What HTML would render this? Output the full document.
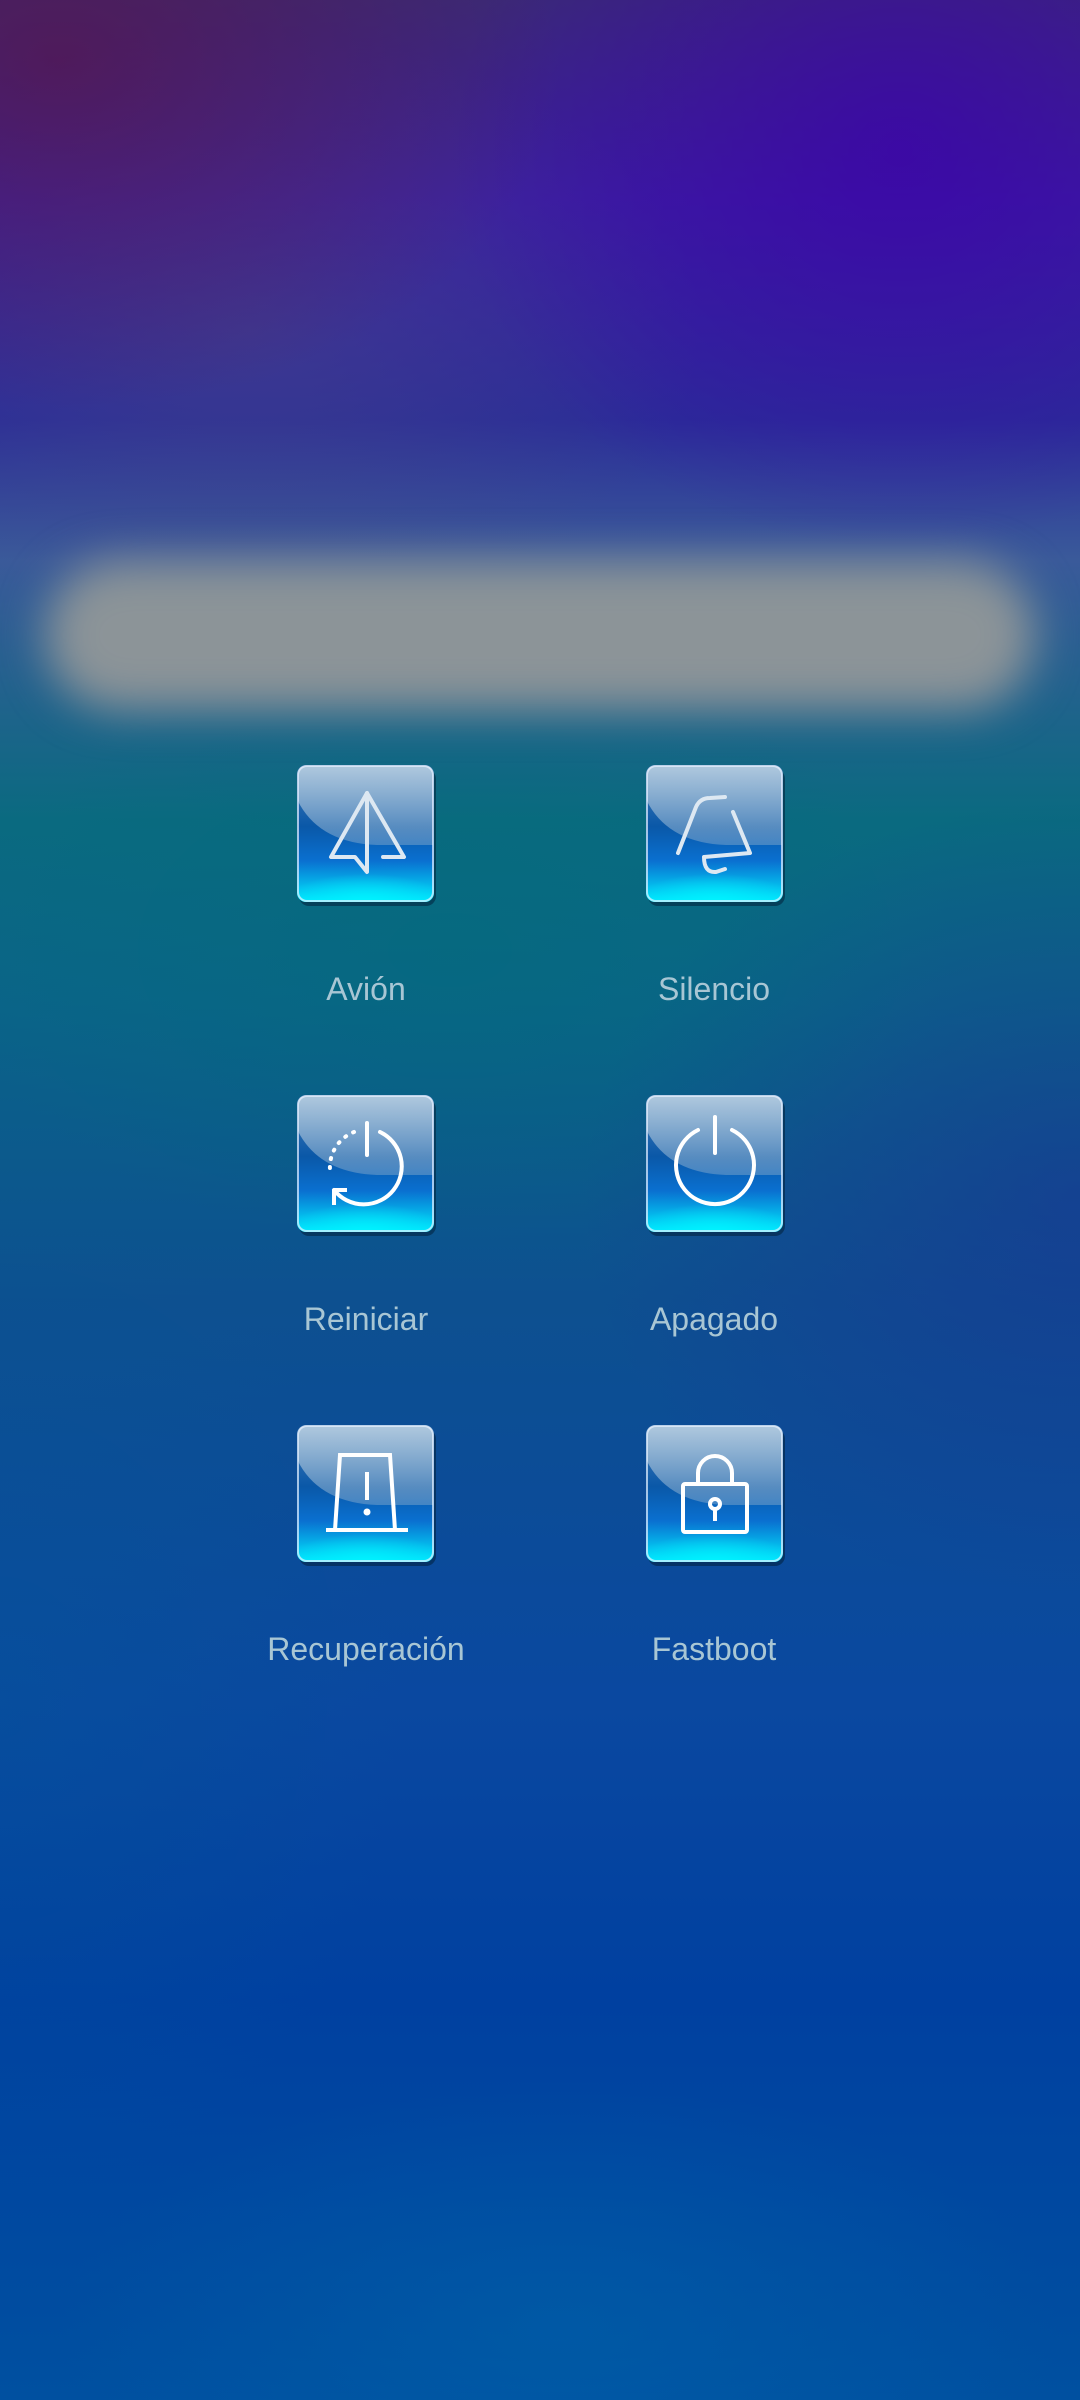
<!DOCTYPE html>
<html><head><meta charset="utf-8"><style>
html,body{margin:0;padding:0}
body{width:1080px;height:2400px;position:relative;overflow:hidden;
background:linear-gradient(180deg,#3a2a78 0px,#3a1ea0 200px,#2a2c98 420px,#3a5a9a 560px,#0a6a80 820px,#0a6488 1000px,#0d5090 1300px,#0a48a0 1700px,#0040a0 2000px,#0050a0 2400px);}
.l{position:absolute;left:0;top:0;width:1080px;height:2400px}
.band{position:absolute;left:45px;top:560px;width:990px;height:150px;border-radius:75px;background:#8c9498;filter:blur(22px)}
.lab{position:absolute;width:400px;text-align:center;font-family:"Liberation Sans",sans-serif;font-size:32px;color:#a8c6d4}
svg.ic{position:absolute;width:137px;height:137px;overflow:visible}
</style></head><body>
<div class="l" style="background:radial-gradient(ellipse 500px 350px at 60px 60px,rgba(90,20,70,.65),transparent),radial-gradient(ellipse 450px 400px at 900px 150px,rgba(60,0,170,.7),transparent),radial-gradient(ellipse 450px 300px at 250px 330px,rgba(80,80,130,.4),transparent)"></div>
<div class="l" style="background:radial-gradient(ellipse 500px 300px at 450px 950px,rgba(0,110,120,.4),transparent),radial-gradient(ellipse 500px 400px at 1080px 1200px,rgba(30,40,150,.45),transparent),radial-gradient(ellipse 500px 250px at 560px 2330px,rgba(0,100,170,.5),transparent),radial-gradient(ellipse 400px 500px at 0px 1700px,rgba(0,90,150,.3),transparent)"></div>
<div class="band"></div>

<svg width="0" height="0" style="position:absolute">
<defs>
<linearGradient id="g" x1="0" y1="0" x2="0" y2="1">
<stop offset="0" stop-color="#4b80b8"/><stop offset=".45" stop-color="#0a58a8"/><stop offset=".7" stop-color="#0a70d0"/><stop offset="1" stop-color="#00eaff"/></linearGradient>
<linearGradient id="h" x1="0" y1="0" x2="0" y2="1">
<stop offset="0" stop-color="#b4cce0" stop-opacity=".95"/><stop offset="1" stop-color="#7ea6cc" stop-opacity=".5"/></linearGradient>
<radialGradient id="c" cx=".5" cy="1" r=".6"><stop offset="0" stop-color="#00f4ff" stop-opacity=".9"/><stop offset="1" stop-color="#00f4ff" stop-opacity="0"/></radialGradient>
<g id="box">
<rect x="2" y="4" width="137" height="137" rx="10" fill="#02203a" opacity=".55"/>
<rect x="0" y="0" width="137" height="137" rx="9" fill="url(#g)"/>
<rect x="0" y="90" width="137" height="47" rx="9" fill="url(#c)"/>
<path d="M9 1 H128 Q136 1 136 9 V80 H80 Q25 78 3 40 L1 36 V9 Q1 1 9 1Z" fill="url(#h)"/>
<rect x="1" y="1" width="135" height="135" rx="9" fill="none" stroke="#e8f2ff" stroke-opacity=".7" stroke-width="2"/>
</g>
</defs></svg>

<svg class="ic" style="left:297px;top:765px" viewBox="0 0 137 137"><use href="#box"/>
<g fill="none" stroke="#dde8f2" stroke-width="4" stroke-linejoin="round" stroke-linecap="round"><path d="M70 28 L34 92 L58 92 L70 107 Z"/><path d="M70 28 L107 92 L86 92"/></g></svg>

<svg class="ic" style="left:646px;top:765px" viewBox="0 0 137 137"><use href="#box"/>
<g fill="none" stroke="#dde8f2" stroke-width="4" stroke-linecap="round" stroke-linejoin="round"><path d="M32 88 L50 42 Q54 33 64 33 L79 32"/><path d="M87 47 L104 88 L58 92 Q58 108 70 107 L79 104"/></g></svg>

<svg class="ic" style="left:297px;top:1095px" viewBox="0 0 137 137"><use href="#box"/>
<g fill="none" stroke="#fff" stroke-width="4" stroke-linecap="round"><path d="M70 28 V60"/><path d="M83 37 A38 38 0 1 1 37 95"/><path d="M57 37 A38 38 0 0 0 33 75" stroke-dasharray="1 8"/><path d="M37 95 L37 110 M37 95 L50 95" stroke-linecap="butt"/></g></svg>

<svg class="ic" style="left:646px;top:1095px" viewBox="0 0 137 137"><use href="#box"/>
<g fill="none" stroke="#fff" stroke-width="4" stroke-linecap="round"><path d="M69 22 V58"/><path d="M86 35 A39 39 0 1 1 52 35"/></g></svg>

<svg class="ic" style="left:297px;top:1425px" viewBox="0 0 137 137"><use href="#box"/>
<g fill="none" stroke="#fff" stroke-width="4"><path d="M38 105 L43 30 H93 L98 105"/><path d="M29 105 H111"/><path d="M70 47 V75"/></g><circle cx="70" cy="87" r="3.5" fill="#fff"/></svg>

<svg class="ic" style="left:646px;top:1425px" viewBox="0 0 137 137"><use href="#box"/>
<g fill="none" stroke="#fff" stroke-width="4" stroke-linejoin="round"><rect x="37" y="59" width="64" height="48" rx="2"/><path d="M52 59 V48 A17 17 0 0 1 86 48 V59"/><circle cx="69" cy="79" r="5"/><path d="M69 84 V96"/></g></svg>

<div class="lab" style="left:166px;top:971px">Avión</div>
<div class="lab" style="left:514px;top:971px">Silencio</div>
<div class="lab" style="left:166px;top:1301px">Reiniciar</div>
<div class="lab" style="left:514px;top:1301px">Apagado</div>
<div class="lab" style="left:166px;top:1631px">Recuperación</div>
<div class="lab" style="left:514px;top:1631px">Fastboot</div>
</body></html>
